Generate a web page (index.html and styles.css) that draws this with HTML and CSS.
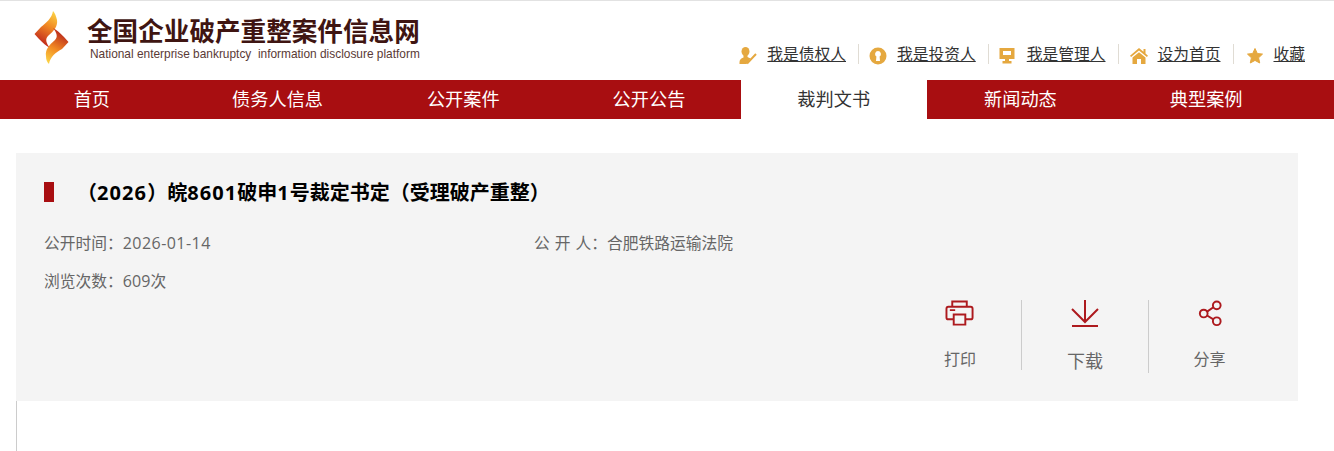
FILE: index.html
```html
<!DOCTYPE html>
<html lang="zh-CN">
<head>
<meta charset="utf-8">
<title>裁判文书</title>
<link rel="stylesheet" href="styles.css">
</head>
<body>
<header class="header">
  <div class="brand">
    <svg class="brand-logo" viewBox="0 0 36 55" aria-hidden="true">
      <defs>
        <linearGradient id="lgA" gradientUnits="userSpaceOnUse" x1="20" y1="2" x2="4" y2="30"><stop offset="0" stop-color="#fbd244"/><stop offset="0.45" stop-color="#f28a23"/><stop offset="1" stop-color="#c4301d"/></linearGradient>
        <linearGradient id="lgB" gradientUnits="userSpaceOnUse" x1="15" y1="53" x2="32" y2="24"><stop offset="0" stop-color="#fbd244"/><stop offset="0.45" stop-color="#f28a23"/><stop offset="1" stop-color="#b8261b"/></linearGradient>
      </defs>
      <path fill="url(#lgA)" d="M19 1C18 8 12 13 7 17L0.5 24L5 29C9 33 12 36 16 38C12 33 11 29 14 26C20 21 24 16 23 10C22 6 21 3 19 1Z"/>
      <path fill="url(#lgB)" d="M15 54C16 47 22 42 28 39L34.5 32L30 27C26 23 23 20 19 18C23 23 24 27 21 30C15 35 11 40 12 46C12 50 13 52 15 54Z"/>
    </svg>
    <div class="brand-text">
      <div class="brand-cn">全国企业破产重整案件信息网</div>
      <div class="brand-en">National enterprise bankruptcy&nbsp; information disclosure platform</div>
    </div>
  </div>
  <nav class="toplinks">
    <div class="toplink">
      <svg class="tl-icon" viewBox="0 0 18 18"><ellipse cx="6.5" cy="4.5" rx="4" ry="4.5"/><path d="M4.500 8H8.500V10L11.500 11.500L7.500 17H0.500C0.500 13 1 12 4.500 10.500Z"/><path class="tl-pen" d="M17 7L8 16.500"/></svg>
      <a class="tl-link" href="#">我是债权人</a>
    </div>
    <div class="toplink toplink-tight">
      <svg class="tl-icon" viewBox="0 0 18 18"><path fill-rule="evenodd" d="M9 0.500a8.500 8.500 0 1 1 0 17A8.500 8.500 0 0 1 9 0.500ZM9 4a3 3 0 0 0-1.600 5.500L7 14h4l-0.400-4.500A3 3 0 0 0 9 4Z"/></svg>
      <a class="tl-link" href="#">我是投资人</a>
    </div>
    <div class="toplink toplink-tight">
      <svg class="tl-icon" viewBox="0 0 18 18"><path fill-rule="evenodd" d="M0.500 1H15.500V12H10V14H12.500V16.500H3.500V14H6V12H0.500ZM4 4V8H12V4Z"/></svg>
      <a class="tl-link" href="#">我是管理人</a>
    </div>
    <div class="toplink toplink-home">
      <svg class="tl-icon" viewBox="0 0 18 17"><path d="M9 0.500L13.500 4.300V1.500H15.500V6L18 8.200L16.900 9.500L9 3L1.100 9.500L0 8.200Z"/><path d="M9 4.800L15.500 10V16.500H11V11.500H7V16.500H2.500V10Z"/></svg>
      <a class="tl-link" href="#">设为首页</a>
    </div>
    <div class="toplink toplink-last">
      <svg class="tl-icon tl-star" viewBox="0 0 18 18"><path d="M9 1.500L11.300 6.500L16.500 7.100L12.600 10.800L13.700 16L9 13.400L4.300 16L5.400 10.800L1.500 7.100L6.700 6.500Z"/></svg>
      <a class="tl-link" href="#">收藏</a>
    </div>
  </nav>
</header>

<nav class="mainnav">
  <a class="nav-item" href="#">首页</a>
  <a class="nav-item" href="#">债务人信息</a>
  <a class="nav-item" href="#">公开案件</a>
  <a class="nav-item" href="#">公开公告</a>
  <a class="nav-item is-active" href="#">裁判文书</a>
  <a class="nav-item" href="#">新闻动态</a>
  <a class="nav-item" href="#">典型案例</a>
</nav>

<main class="content">
  <section class="panel">
    <h1 class="title"><span class="title-mark"></span><span class="title-text">（<span class="num">2026</span>）皖<span class="num">8601</span>破申<span class="num">1</span>号裁定书定（受理破产重整）</span></h1>
    <div class="meta-row">
      <span class="meta-cell">公开时间：<span class="num">2026-01-14</span></span>
      <span class="meta-cell meta-person">公 开 人：合肥铁路运输法院</span>
    </div>
    <div class="meta-row meta-row-2">
      <span class="meta-cell">浏览次数：<span class="num num-count">609</span>次</span>
    </div>
    <div class="actions">
      <a class="action action-print" href="#">
        <svg class="action-icon" viewBox="0 0 32 30"><path d="M8 7V1.500H23V7M9.500 20H4Q2 20 2 18V9Q2 7 4 7H27Q29 7 29 9V18Q29 20 27 20H21.500M9.500 15H21.500V25.500H9.500ZM5.500 10.500H11"/></svg>
        <span class="action-label">打印</span>
      </a>
      <a class="action action-down" href="#">
        <svg class="action-icon" viewBox="0 0 32 30"><path d="M16 0V22M3 9L16 22L29 9M3 26H29"/></svg>
        <span class="action-label">下载</span>
      </a>
      <a class="action action-share" href="#">
        <svg class="action-icon" viewBox="0 0 32 30"><circle cx="23" cy="5.500" r="4"/><circle cx="9.500" cy="14" r="4"/><circle cx="23" cy="22" r="4"/><path d="M13 12L19.500 7.500M13 16L19.500 20"/></svg>
        <span class="action-label">分享</span>
      </a>
    </div>
  </section>
  <div class="below"></div>
</main>
</body>
</html>
```
FILE: styles.css
```css
* { box-sizing: border-box; }
html, body { margin: 0; padding: 0; background: #fff; }
body {
  font-family: "Noto Sans CJK SC", "Liberation Sans", sans-serif;
  color: #333;
  height: 451px;
  overflow: hidden;
}
a { color: inherit; text-decoration: none; }

.header {
  height: 80px;
  border-top: 1px solid #e2e2e2;
  display: flex;
  justify-content: space-between;
  padding: 9px 29px 0 34px;
}
.brand { display: flex; align-items: flex-start; gap: 17px; }
.brand-logo { width: 36px; height: 55px; flex: none; }
.brand-text { padding-top: 3px; }
.brand-cn {
  font-size: 25.6px;
  line-height: 34px;
  font-weight: 700;
  color: #3f1512;
  white-space: nowrap;
}
.brand-en {
  font-family: "Liberation Sans", sans-serif;
  font-size: 11.9px;
  line-height: 14px;
  color: #5a3a36;
  white-space: nowrap;
  margin-left: 3px;
}

.toplinks { display: flex; align-items: center; align-self: flex-start; margin-top: 34px; }
.toplink {
  display: flex;
  align-items: center;
  height: 20px;
  padding: 0 12px;
  border-right: 1px solid #e0dcd4;
  gap: 10px;
}
.toplink-tight { padding-left: 10px; }
.toplink-home { padding-left: 11px; }
.toplink-last { border-right: 0; padding-right: 0; }
.tl-icon { width: 18px; height: 18px; fill: #e5a83f; flex: none; margin-top: 4px; }
.tl-pen { fill: none; stroke: #e5a83f; stroke-width: 2; }
.tl-star { stroke: #e5a83f; stroke-width: 1; stroke-linejoin: round; }
.tl-link { font-size: 15.75px; line-height: 20px; color: #333; text-decoration: underline; white-space: nowrap; }

.mainnav {
  width: 1300px;
  height: 39px;
  margin-left: -2px;
  display: grid;
  grid-template-columns: repeat(7, 1fr);
  background: #a80e11;
  box-shadow: 40px 0 0 #a80e11;
}
.nav-item {
  color: #fff;
  font-size: 18.2px;
  line-height: 37px;
  text-align: center;
  padding-left: 2px;
}
.nav-item.is-active { background: #fff; color: #333; padding-left: 0; }

.content { padding: 34px 36px 0 16px; }
.panel {
  height: 248px;
  background: #f4f4f4;
  padding: 28px 28px 0;
  position: relative;
}
.title {
  margin: 0;
  display: flex;
  align-items: center;
  height: 22px;
  font-size: 20px;
  font-weight: 700;
  color: #000;
}
.title-mark { width: 10px; height: 20px; background: #a80e11; flex: none; }
.title-text { margin-left: 23px; line-height: 22px; white-space: nowrap; }
.num { font-family: "Open Sans", "Noto Sans CJK SC", sans-serif; }
.title .num { letter-spacing: 1.1px; }

.meta-row { display: flex; margin-top: 28px; font-size: 15.75px; line-height: 24px; color: #666; }
.meta-row-2 { margin-top: 14px; }
.meta-row .num { font-size: 16px; letter-spacing: 0.45px; }
.meta-row .num-count { letter-spacing: 0.1px; }
.meta-cell { width: 490px; white-space: nowrap; }
.meta-person { word-spacing: 1.5px; }

.actions { display: flex; position: absolute; left: 879px; top: 147px; }
.action {
  display: flex;
  flex-direction: column;
  align-items: center;
  width: 127px;
  height: 70px;
  border-right: 1px solid #ccc;
  color: #666;
}
.action-print { padding-left: 4px; }
.action-down { height: 73px; }
.action-share { border-right: 0; padding-right: 6px; }
.action-icon {
  width: 32px;
  height: 30px;
  fill: none;
  stroke: #ad1a1e;
  stroke-width: 2;
}
.action-label { margin-top: 17px; font-size: 16px; line-height: 24px; }
.action-down .action-label { font-size: 18px; line-height: 26px; }

.below { height: 50px; width: 1px; background: #ccc; }
```
